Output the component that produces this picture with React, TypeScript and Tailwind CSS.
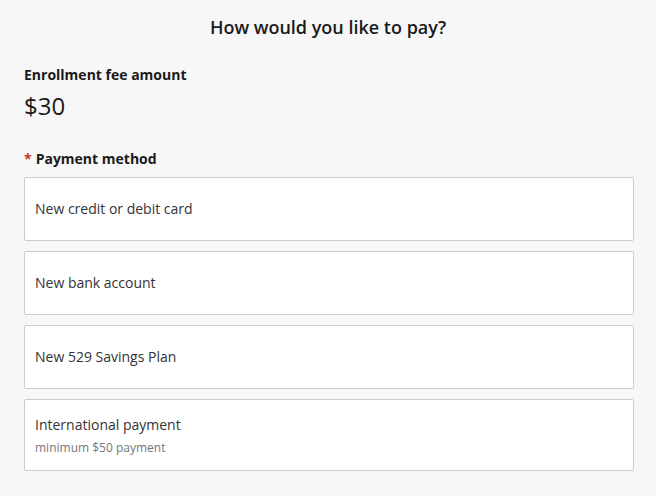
const methods = [
  { label: 'New credit or debit card' },
  { label: 'New bank account' },
  { label: 'New 529 Savings Plan' },
  { label: 'International payment', note: 'minimum $50 payment' },
];

export default function App() {
  return (
    <div className="min-h-[496px] w-full bg-[#f7f7f7] font-['Open_Sans',sans-serif] text-[#1a1a1a]">
      <h1 className="pt-[14px] text-center text-[18px] font-semibold leading-[26px]">How would you like to pay?</h1>

      <div className="pl-6 pr-[22px]">
        <div className="mt-[25px] text-[14px] font-bold leading-[20px]">Enrollment fee amount</div>
        <div className="mt-[6px] text-[24px] leading-[30px]">$30</div>

        <div className="mt-[28px] text-[14px] font-bold leading-[20px]">
          <span className="mr-1 text-[#c0392b]">*</span>Payment method
        </div>

        <div className="mt-[8px] flex flex-col gap-[10px]">
          {methods.map((m) => (
            <div
              key={m.label}
              className={`flex flex-col justify-center rounded-[2px] border border-[#cccccc] bg-white px-[10px] ${m.note ? 'h-[72px]' : 'h-[64px]'}`}
            >
              <div className="text-[14px] leading-[20px] text-[#333333]">{m.label}</div>
              {m.note && <div className="mt-[5px] text-[12px] leading-[16px] text-[#777777]">{m.note}</div>}
            </div>
          ))}
        </div>
      </div>
    </div>
  );
}
